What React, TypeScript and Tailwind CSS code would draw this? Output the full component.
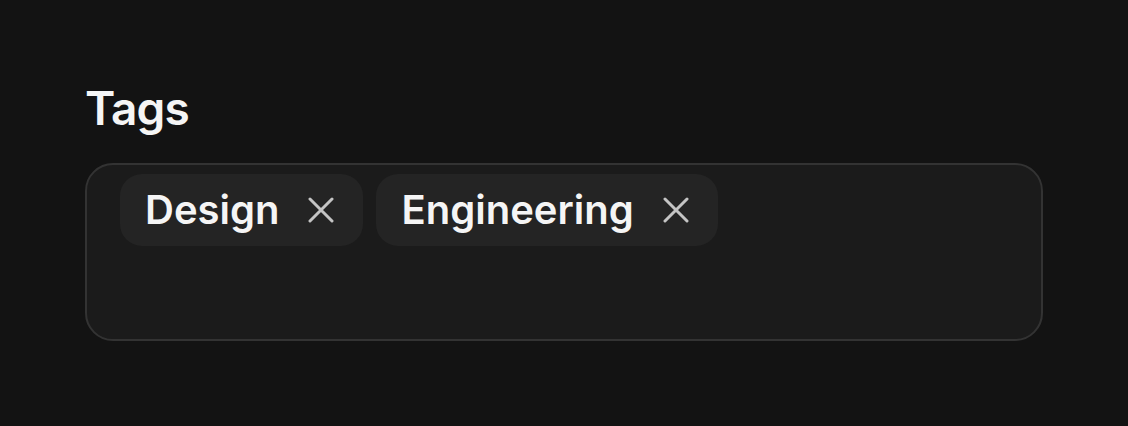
import React from 'react';

const tags = ['Design', 'Engineering'];

function XIcon() {
  return (
    <svg width="26" height="26" viewBox="0 0 26 26" fill="none" stroke="currentColor" strokeWidth="3" strokeLinecap="round">
      <path d="M2 2L24 24M24 2L2 24" />
    </svg>
  );
}

export default function App() {
  return (
    <div className="min-h-[426px] w-full bg-[#131313] px-[85px] pt-[78px] font-['Inter',sans-serif]">
      <h1 className="text-[46px] font-semibold leading-[60px] text-[#f5f5f5] tracking-[-0.02em]">Tags</h1>
      <div className="mt-[25px] flex h-[178px] w-[958px] flex-wrap content-start gap-[13px] rounded-[28px] border-2 border-[#333333] bg-[#1b1b1b] pl-[33px] pt-[9px]">
        {tags.map((tag) => (
          <div key={tag} className="flex h-[72px] items-center rounded-[22px] bg-[#242424] pl-[25px] pr-[29px]">
            <span className="text-[40px] font-semibold text-[#f5f5f5]">{tag}</span>
            <button className="ml-[29px] flex text-[#c4c4c4]">
              <XIcon />
            </button>
          </div>
        ))}
      </div>
    </div>
  );
}
